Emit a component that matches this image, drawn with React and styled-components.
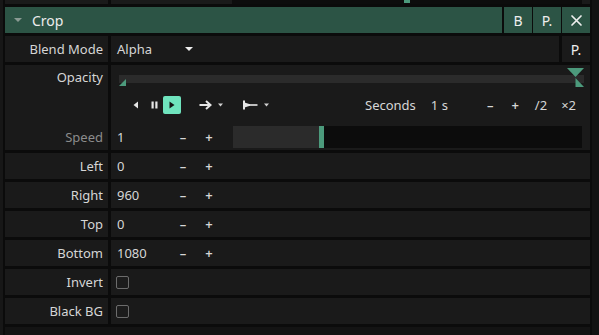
import React from "react";
import styled, { createGlobalStyle } from "styled-components";

const GlobalStyle = createGlobalStyle`
  html, body {
    margin: 0;
    padding: 0;
    background: #0b0b0b;
    overflow: hidden;
  }
  body {
    font-family: "Noto Sans", "Open Sans", sans-serif;
    font-size: 13px;
    color: #d6d6d6;
  }
`;

const Screen = styled.div`
  display: flex;
  width: 599px;
  height: 335px;
  gap: 2px;
  overflow: hidden;
`;

const EdgeStrip = styled.div`
  width: ${(p) => p.$w}px;
  flex: none;
  background: ${(p) => p.$bg};
`;

const Panel = styled.div`
  width: 585px;
  flex: none;
  display: flex;
  flex-direction: column;
  gap: 3px;
`;

const Row = styled.div`
  display: flex;
  height: ${(p) => p.$h || 26}px;
  flex: none;
  gap: 3px;
`;

const Label = styled.div`
  width: 103px;
  flex: none;
  background: #1a1a1a;
  display: flex;
  align-items: center;
  justify-content: flex-end;
  padding-right: 5px;
  box-sizing: border-box;
  color: #d6d6d6;
`;

const TallLabel = styled(Label)`
  flex-direction: column;
  align-items: flex-end;
  justify-content: space-between;
  padding-top: 3px;
  padding-bottom: 4px;
`;

const DimText = styled.span`
  color: #8c8c8c;
`;

const Value = styled.div`
  flex: 1;
  background: #1a1a1a;
  display: flex;
  align-items: center;
  min-width: 0;
`;

const Header = styled.div`
  display: flex;
  height: 26px;
  flex: none;
  gap: 1px;
`;

const Title = styled.div`
  flex: 1;
  background: #2c5445;
  display: flex;
  align-items: center;
  padding-left: 9px;
  gap: 10px;
  color: #ececec;
  font-size: 14px;
  margin-right: 1px;
`;

const Caret = styled.span`
  width: 0;
  height: 0;
  border-left: ${(p) => p.$s}px solid transparent;
  border-right: ${(p) => p.$s}px solid transparent;
  border-top: ${(p) => p.$s}px solid ${(p) => p.$c};
  flex: none;
`;

const HeadButton = styled.div`
  width: 28px;
  flex: none;
  background: ${(p) => (p.$plain ? "#1a1a1a" : "#2c5445")};
  display: flex;
  align-items: center;
  justify-content: center;
  color: #eeeeee;
  font-size: 14px;
`;

const Field = styled.div`
  width: 59px;
  flex: none;
  padding-left: 6px;
  box-sizing: border-box;
`;

const StepButton = styled.div`
  width: 26px;
  flex: none;
  text-align: center;
  font-weight: 600;
  color: #d6d6d6;
`;

const Select = styled.div`
  display: flex;
  align-items: center;
  padding-left: 6px;
`;

const SelectText = styled.span`
  width: 68px;
`;

const Checkbox = styled.div`
  width: 11px;
  height: 11px;
  border: 1.5px solid #6c6c6c;
  border-radius: 2px;
  margin-left: 5px;
  background: #1c1c1c;
`;

const AnimCell = styled(Value)`
  flex-direction: column;
  align-items: stretch;
`;

const KeyTrack = styled.div`
  position: relative;
  height: 20px;
  margin: 3px 6px 0 8px;
  display: flex;
  align-items: center;
`;

const TrackBar = styled.div`
  flex: 1;
  height: 8px;
  margin-top: 2px;
  background: #2b2b2b;
`;

const StartKey = styled.div`
  position: absolute;
  left: 0;
  bottom: 2px;
  width: 0;
  height: 0;
  border-bottom: 7px solid #4c9a7c;
  border-left: 7px solid transparent;
`;

const EndKey = styled.svg`
  position: absolute;
  right: 0;
  top: 0;
`;

const Transport = styled.div`
  display: flex;
  align-items: center;
  height: 18px;
  margin-top: 8px;
  padding-left: 22px;
  padding-right: 14px;
`;

const IconSlot = styled.div`
  display: flex;
  align-items: center;
  margin-right: ${(p) => p.$mr}px;
`;

const PlayBox = styled.div`
  width: 18px;
  height: 18px;
  border-radius: 2px;
  background: #6fe3bd;
  display: flex;
  align-items: center;
  justify-content: center;
  margin-right: 18px;
`;

const TimeGroup = styled.div`
  margin-left: auto;
  display: flex;
  align-items: center;
`;

const TimeText = styled.span`
  margin-right: ${(p) => p.$mr}px;
  font-weight: ${(p) => (p.$bold ? 600 : 400)};
`;

const SpeedRow = styled.div`
  display: flex;
  align-items: center;
  height: 22px;
  margin-top: 12px;
`;

const SpeedBar = styled.div`
  flex: 1;
  height: 22px;
  margin-left: 11px;
  margin-right: 8px;
  background: #0c0c0c;
  display: flex;
`;

const SpeedFill = styled.div`
  background: #2b2b2b;
`;

const SpeedHandle = styled.div`
  width: 5px;
  background: #4c9a7c;
`;

const TopStrip = styled.div`
  display: flex;
  height: 4px;
  flex: none;
  gap: 3px;
`;

const TopTrack = styled.div`
  flex: 1;
  background: #1a1a1a;
  display: flex;
  padding-left: 121px;
  padding-right: 8px;
`;

const TopTrackInner = styled.div`
  flex: 1;
  background: #0d0d0d;
  display: flex;
  align-items: flex-start;
`;

const TopHandle = styled.div`
  width: 6px;
  height: 3px;
  margin-left: 172px;
  background: #4c9a7c;
`;

const Spacer = styled.div`
  flex: 1;
  background: #131313;
`;

const XIcon = () => (
  <svg width="13" height="13" viewBox="0 0 13 13">
    <path d="M2 2 L11 11 M11 2 L2 11" stroke="#eeeeee" strokeWidth="1.7" strokeLinecap="round" />
  </svg>
);

const PrevIcon = () => (
  <svg width="6" height="8" viewBox="0 0 6 8">
    <path d="M5 0.5 V7.5 L0.5 4 Z" fill="#e6e6e6" />
  </svg>
);

const PauseIcon = () => (
  <svg width="7" height="8" viewBox="0 0 7 8">
    <rect x="0.5" y="0.5" width="2.2" height="7" fill="#e6e6e6" />
    <rect x="4.3" y="0.5" width="2.2" height="7" fill="#e6e6e6" />
  </svg>
);

const PlayIcon = () => (
  <svg width="6" height="8" viewBox="0 0 6 8">
    <path d="M0.5 0.5 V7.5 L5.5 4 Z" fill="#141414" />
  </svg>
);

const ArrowIcon = () => (
  <svg width="13" height="10" viewBox="0 0 13 10">
    <path d="M0.5 5 H10" stroke="#e6e6e6" strokeWidth="2" />
    <path d="M7 1 L11.5 5 L7 9" stroke="#e6e6e6" strokeWidth="2" fill="none" />
  </svg>
);

const EndIcon = () => (
  <svg width="15" height="10" viewBox="0 0 15 10">
    <path d="M1 0.5 V9.5" stroke="#e6e6e6" strokeWidth="2" />
    <path d="M1.5 2.5 L7 4.2 V5.8 L1.5 7.5 Z" fill="#e6e6e6" />
    <path d="M6 5 H14.5" stroke="#e6e6e6" strokeWidth="1.6" />
  </svg>
);

const CaretSvg = styled.svg`
  margin-left: 6px;
`;

const SmallCaret = () => (
  <CaretSvg width="5" height="4" viewBox="0 0 5 4">
    <path d="M0 0.5 H5 L2.5 3.5 Z" fill="#d0d0d0" />
  </CaretSvg>
);

const NumberRow = ({ label, value }) => (
  <Row>
    <Label>{label}</Label>
    <Value>
      <Field>{value}</Field>
      <StepButton>–</StepButton>
      <StepButton>+</StepButton>
    </Value>
  </Row>
);

const CheckRow = ({ label }) => (
  <Row>
    <Label>{label}</Label>
    <Value>
      <Checkbox />
    </Value>
  </Row>
);

export default function App() {
  return (
    <>
      <GlobalStyle />
      <Screen>
        <EdgeStrip $w={3} $bg="#171717" />
        <Panel>
          <TopStrip>
            <Label />
            <TopTrack>
              <TopTrackInner>
                <TopHandle />
              </TopTrackInner>
            </TopTrack>
          </TopStrip>

          <Header>
            <Title>
              <Caret $s={4} $c="#8a9a93" />
              Crop
            </Title>
            <HeadButton>B</HeadButton>
            <HeadButton>P.</HeadButton>
            <HeadButton>
              <XIcon />
            </HeadButton>
          </Header>

          <Row>
            <Label>Blend Mode</Label>
            <Value>
              <Select>
                <SelectText>Alpha</SelectText>
                <Caret $s={4} $c="#eeeeee" />
              </Select>
            </Value>
            <HeadButton $plain>P.</HeadButton>
          </Row>

          <Row $h={85}>
            <TallLabel>
              <span>Opacity</span>
              <DimText>Speed</DimText>
            </TallLabel>
            <AnimCell>
              <KeyTrack>
                <TrackBar />
                <StartKey />
                <EndKey width="17" height="20" viewBox="0 0 17 20">
                  <path d="M0 0 H17 L8.5 9 Z" fill="#4c9a7c" />
                  <path d="M8.5 10 L17 19 H8.5 Z" fill="#4c9a7c" />
                </EndKey>
              </KeyTrack>
              <Transport>
                <IconSlot $mr={12}>
                  <PrevIcon />
                </IconSlot>
                <IconSlot $mr={5}>
                  <PauseIcon />
                </IconSlot>
                <PlayBox>
                  <PlayIcon />
                </PlayBox>
                <IconSlot $mr={20}>
                  <ArrowIcon />
                  <SmallCaret />
                </IconSlot>
                <IconSlot $mr={0}>
                  <EndIcon />
                  <SmallCaret />
                </IconSlot>
                <TimeGroup>
                  <TimeText $mr={15}>Seconds</TimeText>
                  <TimeText $mr={39}>1 s</TimeText>
                  <TimeText $mr={18} $bold>–</TimeText>
                  <TimeText $mr={16} $bold>+</TimeText>
                  <TimeText $mr={14}>/2</TimeText>
                  <TimeText $mr={0}>×2</TimeText>
                </TimeGroup>
              </Transport>
              <SpeedRow>
                <Field>1</Field>
                <StepButton>–</StepButton>
                <StepButton>+</StepButton>
                <SpeedBar>
                  <SpeedFill style={{ width: 86 }} />
                  <SpeedHandle />
                </SpeedBar>
              </SpeedRow>
            </AnimCell>
          </Row>

          <NumberRow label="Left" value="0" />
          <NumberRow label="Right" value="960" />
          <NumberRow label="Top" value="0" />
          <NumberRow label="Bottom" value="1080" />
          <CheckRow label="Invert" />
          <CheckRow label="Black BG" />
          <Spacer />
        </Panel>
        <EdgeStrip $w={7} $bg="#121212" />
      </Screen>
    </>
  );
}
